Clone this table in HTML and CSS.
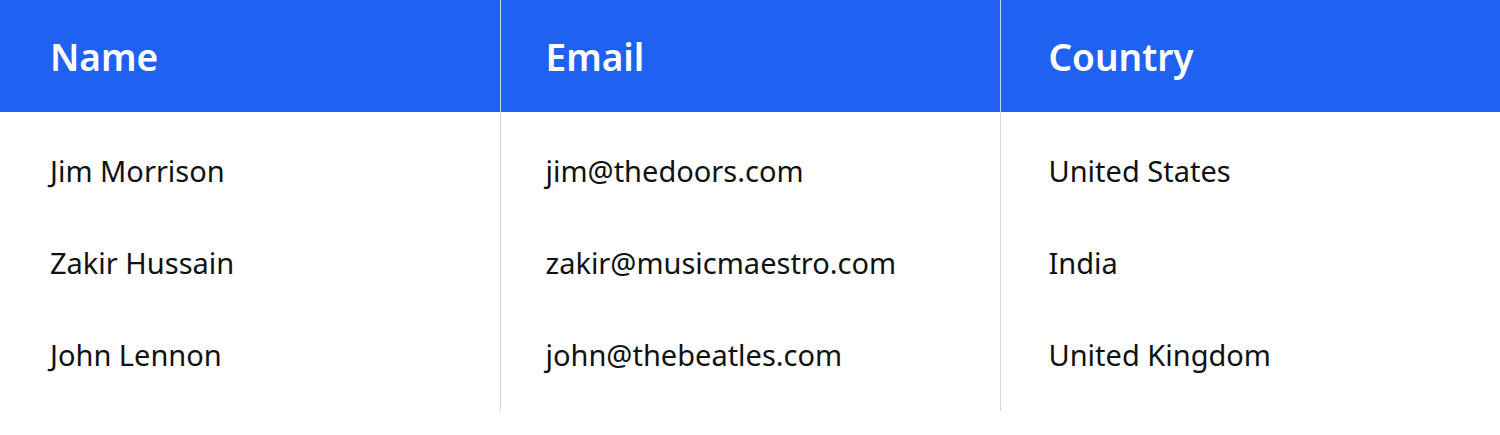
FILE: index.html
```html
<!DOCTYPE html>
<html lang="en">
<head>
    <meta charset="UTF-8">
    <meta name="viewport" content="width=device-width, initial-scale=1.0">
    <title>Contacts</title>
    <link rel="stylesheet" href="styles.css">
</head>
<body>
    <table class="contacts">
        <thead>
            <tr>
                <th>Name</th>
                <th>Email</th>
                <th>Country</th>
            </tr>
        </thead>
        <tbody>
            <tr class="first">
                <td>Jim Morrison</td>
                <td>jim@thedoors.com</td>
                <td>United States</td>
            </tr>
            <tr>
                <td>Zakir Hussain</td>
                <td>zakir@musicmaestro.com</td>
                <td>India</td>
            </tr>
            <tr class="last">
                <td>John Lennon</td>
                <td>john@thebeatles.com</td>
                <td>United Kingdom</td>
            </tr>
        </tbody>
    </table>
</body>
</html>
```

FILE: styles.css
```css
body {
    margin: 0;
    font-family: "Noto Sans", sans-serif;
    color: #111;
    background: #fff;
}
.contacts {
    width: 1500px;
    border-collapse: collapse;
    table-layout: fixed;
}
.contacts th,
.contacts td {
    text-align: left;
    padding: 0 0 0 50px;
    border-left: 1px solid #d9d9d9;
}
.contacts th:first-child,
.contacts td:first-child {
    border-left: none;
}
.contacts th:nth-child(2),
.contacts td:nth-child(2) {
    padding-left: 45px;
}
.contacts th:nth-child(3),
.contacts td:nth-child(3) {
    padding-left: 48px;
}
.contacts thead tr {
    background-color: #1f62f1;
    height: 112px;
}
.contacts th {
    color: #fff;
    font-size: 37px;
    font-weight: 600;
    border-left-color: #c9d4ee;
}
.contacts td {
    font-size: 29px;
    height: 92px;
}
.contacts tr.first td {
    padding-top: 12px;
}
.contacts tr.last td {
    padding-bottom: 11px;
}
```
